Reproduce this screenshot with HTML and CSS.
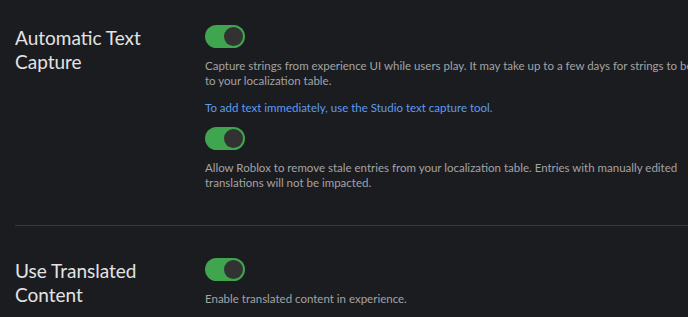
FILE: index.html
```html
<!DOCTYPE html>
<html lang="en">
<head>
    <meta charset="UTF-8">
    <title>Localization Settings</title>
    <link rel="stylesheet" href="styles.css">
</head>
<body>
    <div class="settings">
        <section class="setting-row">
            <h2 class="setting-title">Automatic Text Capture</h2>
            <div class="setting-body">
                <label class="toggle"><input type="checkbox" checked><span class="track"></span></label>
                <p class="hint">Capture strings from experience UI while users play. It may take up to a few days for strings to be added to your localization table.</p>
                <a class="link" href="#">To add text immediately, use the Studio text capture tool.</a>
                <label class="toggle"><input type="checkbox" checked><span class="track"></span></label>
                <p class="hint">Allow Roblox to remove stale entries from your localization table. Entries with manually edited translations will not be impacted.</p>
            </div>
        </section>
        <section class="setting-row">
            <h2 class="setting-title">Use Translated Content</h2>
            <div class="setting-body">
                <label class="toggle"><input type="checkbox" checked><span class="track"></span></label>
                <p class="hint">Enable translated content in experience.</p>
            </div>
        </section>
    </div>
</body>
</html>
```

FILE: styles.css
```css
body {
    margin: 0;
    background: #1b1c20;
    font-family: "Lato", "Liberation Sans", sans-serif;
    overflow: hidden;
}
.settings {
    width: 721px;
    padding-left: 15px;
}
.setting-row {
    display: grid;
    grid-template-columns: 190px 1fr;
    padding: 25px 0 35px;
    border-bottom: 1px solid #393a3e;
}
.setting-row + .setting-row {
    padding-top: 32px;
}
.setting-row:last-child {
    border-bottom: none;
}
.setting-title {
    margin: 0;
    padding-top: 1px;
    font-size: 19px;
    font-weight: 400;
    line-height: 24px;
    color: #e3e3e3;
}
.setting-body {
    display: flex;
    flex-direction: column;
    align-items: flex-start;
}
.toggle {
    display: block;
    cursor: pointer;
}
.toggle input {
    display: none;
}
.track {
    display: block;
    position: relative;
    width: 40px;
    height: 23px;
    border-radius: 12px;
    background: #3fa54f;
}
.track::after {
    content: "";
    position: absolute;
    top: 2px;
    right: 2px;
    width: 19px;
    height: 19px;
    border-radius: 50%;
    background: #323232;
}
.hint {
    margin: 10px 0 0;
    font-size: 11.5px;
    line-height: 15px;
    color: #a3a3a5;
}
.link {
    margin: 12px 0 12px;
    font-size: 11.5px;
    line-height: 15px;
    color: #5d9bf0;
    text-decoration: none;
}
```
